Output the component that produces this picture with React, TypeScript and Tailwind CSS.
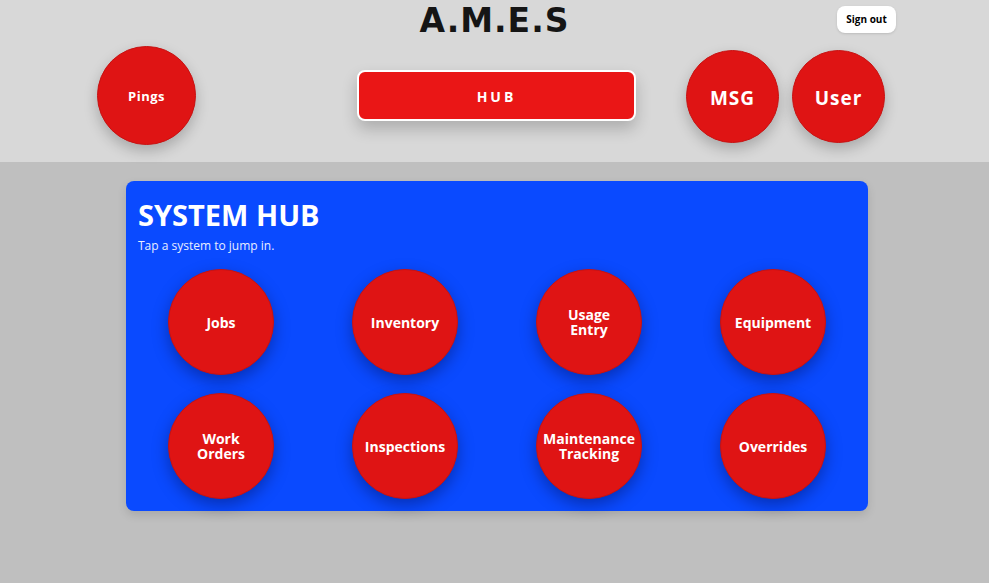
import React from "react";

const systems = [
  ["Jobs"],
  ["Inventory"],
  ["Usage", "Entry"],
  ["Equipment"],
  ["Work", "Orders"],
  ["Inspections"],
  ["Maintenance", "Tracking"],
  ["Overrides"],
];

export default function App() {
  return (
    <div
      className="min-h-[583px] w-full bg-[#bfbfbf] text-white"
      style={{ fontFamily: '"Open Sans", "Noto Sans", sans-serif' }}
    >
      {/* Header */}
      <header className="relative h-[162px] bg-[#d8d8d8]">
        <div className="flex justify-center pt-[2px]">
          <h1
            className="text-[33px] font-black leading-[38px] tracking-[1px] text-[#151515]"
            style={{ fontFamily: '"DejaVu Sans", sans-serif' }}
          >
            A.M.E.S
          </h1>
        </div>
        <button className="absolute left-[837px] top-[6px] flex h-[27px] w-[59px] items-center justify-center rounded-lg bg-white text-[10px] font-bold text-black shadow-sm">
          Sign out
        </button>
        <div className="relative mt-[6px] flex items-start">
          <div className="ml-[97px] flex h-[99px] w-[99px] items-center justify-center rounded-full border border-[#c81212] bg-[#df1414] pt-[2px] text-[13px] font-bold tracking-[0.5px] shadow-[0_6px_14px_rgba(0,0,0,0.22)]">
            Pings
          </div>
          <button className="ml-[161px] mt-[24px] flex h-[51px] w-[279px] items-center justify-center rounded-lg border-2 border-white bg-[#ea1616] pt-[1px] text-[14px] font-bold tracking-[3px] shadow-[0_8px_16px_rgba(0,0,0,0.2)]">
            HUB
          </button>
          <div className="ml-[50px] mt-[4px] flex h-[93px] w-[93px] items-center justify-center rounded-full border border-[#c81212] bg-[#df1414] pt-[3px] text-[19px] font-bold tracking-[1px] shadow-[0_6px_14px_rgba(0,0,0,0.22)]">
            MSG
          </div>
          <div className="ml-[13px] mt-[4px] flex h-[93px] w-[93px] items-center justify-center rounded-full border border-[#c81212] bg-[#df1414] pt-[3px] text-[19px] font-bold tracking-[1px] shadow-[0_6px_14px_rgba(0,0,0,0.22)]">
            User
          </div>
        </div>
      </header>

      {/* Card */}
      <main className="pt-[19px]">
        <section className="ml-[126px] w-[742px] rounded-lg bg-[#0a4aff] pb-[12px] pt-[16px] shadow-[0_4px_10px_rgba(0,0,0,0.12)]">
          <div className="px-3">
            <h2 className="text-[29px] font-bold leading-[36px]">SYSTEM HUB</h2>
            <p className="mt-[5px] text-[12px] leading-[16px] text-[#e8eeff]">
              Tap a system to jump in.
            </p>
          </div>
          <div className="mt-[15px] grid grid-cols-4 gap-y-[18px] px-[3px]">
            {systems.map((lines) => (
              <div key={lines.join(" ")} className="flex justify-center">
                <div className="flex h-[106px] w-[106px] flex-col items-center justify-center rounded-full border border-[#c81212] bg-[#df1414] text-center text-[14px] font-bold leading-[15px] shadow-[0_6px_16px_rgba(0,0,40,0.35)]">
                  {lines.map((l) => (
                    <span key={l} className="block h-[15px] leading-[15px]">
                      {l}
                    </span>
                  ))}
                </div>
              </div>
            ))}
          </div>
        </section>
      </main>
    </div>
  );
}
